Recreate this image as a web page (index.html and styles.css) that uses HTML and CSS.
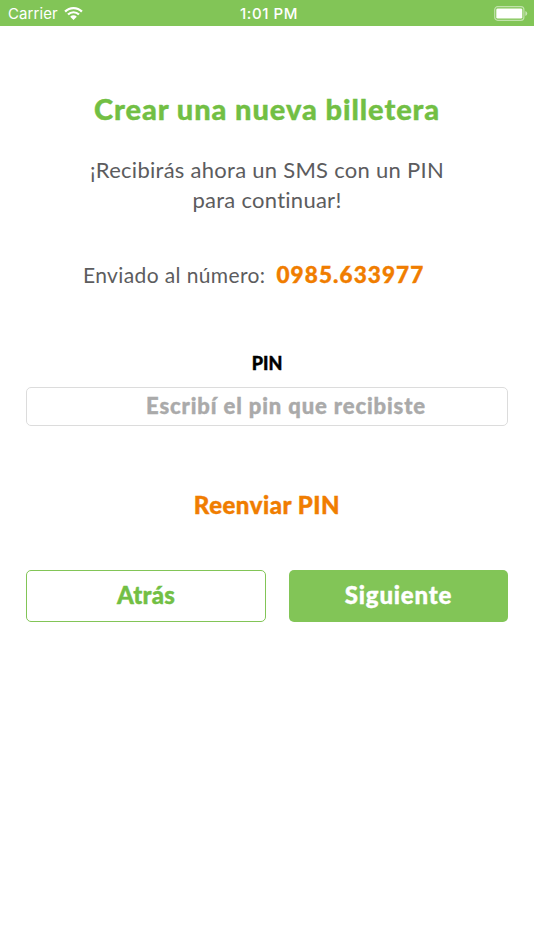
FILE: index.html
```
<!DOCTYPE html>
<html lang="es">
  <head>
    <meta charset="utf-8">
    <meta name="viewport" content="width=device-width, initial-scale=1">
    <title>Crear una nueva billetera</title>
    <link rel="stylesheet" href="styles.css">
  </head>
  <body>
    <header class="statusbar">
      <div class="carrier">
        <span class="carrier-name">Carrier</span>
        <svg class="wifi" width="19" height="14" viewBox="0 0 19 14" fill="#fff">
          <path d="M0.3 4.7 A13 13 0 0 1 18.7 4.7 L17.1 6.4 A10.8 10.8 0 0 0 1.9 6.4 Z" />
          <path d="M3.2 7.7 A9 9 0 0 1 15.8 7.7 L14.2 9.3 A6.7 6.7 0 0 0 4.8 9.3 Z" />
          <path d="M9.5 13.9 L6.2 10.7 A4.7 4.7 0 0 1 12.8 10.7 Z" />
        </svg>
      </div>
      <span class="time">1:01 PM</span>
      <svg class="battery" width="34" height="15" viewBox="0 0 34 15">
        <rect x="0.7" y="0.7" width="29.2" height="13.6" rx="3" fill="none" stroke="#fff" stroke-opacity="0.5" stroke-width="1.2" />
        <rect x="2.3" y="2.4" width="26" height="10.2" rx="1.4" fill="#fff" />
        <path d="M31.4 5 Q33.2 5.8 33.2 7.5 Q33.2 9.2 31.4 10 Z" fill="#fff" fill-opacity="0.55" />
      </svg>
    </header>

    <main class="wallet">
      <h1 class="title">Crear una nueva billetera</h1>
      <p class="intro">¡Recibirás ahora un SMS con un PIN<br>para continuar!</p>
      <p class="sent"><span class="sent-label">Enviado al número:</span><strong class="phone">0985.633977</strong></p>

      <form class="pinform" method="get" action="">
        <label class="pin-label" for="pin">PIN</label>
        <input class="pin" id="pin" type="text" inputmode="numeric" placeholder="Escribí el pin que recibiste">
        <button class="resend" type="button">Reenviar PIN</button>
        <div class="actions">
          <button class="back" type="button">Atrás</button>
          <button class="next" type="submit">Siguiente</button>
        </div>
      </form>
    </main>
  </body>
</html>
```

FILE: styles.css
```
* {
  box-sizing: border-box;
}
body {
  margin: 0;
  background-color: #fff;
  font-family: Lato, "Open Sans", sans-serif;
  font-variant-ligatures: none;
  color: #5c5c5e;
}
button {
  padding: 0;
  border: none;
  background: none;
  font-family: inherit;
  cursor: pointer;
}
.statusbar {
  display: grid;
  grid-template-columns: 1fr auto 1fr;
  align-items: center;
  height: 26px;
  padding: 1px 6px 0 8px;
  background-color: #82c557;
  color: #fff;
  font-family: Inter, sans-serif;
  font-size: 15px;
}
.carrier {
  display: flex;
  align-items: center;
  gap: 6px;
}
.carrier-name {
  letter-spacing: 0.1px;
}
.wifi {
  margin-top: -2px;
}
.time {
  padding-left: 2px;
  font-weight: 500;
  letter-spacing: 0.55px;
}
.battery {
  justify-self: end;
}
.wallet {
  padding: 64px 26px 0;
}
/* Lato stops at bold here, the thin stroke makes it heavier */
.title,
.phone,
.pin-label,
.pin,
.resend,
.back,
.next {
  font-weight: 900;
  -webkit-text-stroke: 0.4px;
}
.title {
  margin: 0;
  color: #72bf44;
  font-size: 29px;
  line-height: 38px;
  letter-spacing: 0.93px;
  text-align: center;
}
.intro {
  margin: 27px 0 0;
  font-size: 22px;
  line-height: 30px;
  letter-spacing: 0.27px;
  text-align: center;
}
.sent {
  display: flex;
  align-items: center;
  gap: 11px;
  margin: 45px 0 0;
  padding-left: 57px;
  font-size: 21px;
  line-height: 30px;
  white-space: nowrap;
}
.sent-label {
  letter-spacing: 0.38px;
}
.phone {
  color: #f07d00;
  font-size: 22.5px;
  letter-spacing: 1.1px;
}
.pinform {
  display: flex;
  flex-direction: column;
}
.pin-label {
  margin-top: 63px;
  color: #000;
  font-size: 18px;
  line-height: 20px;
  text-align: center;
}
.pin {
  height: 39px;
  margin-top: 14px;
  padding: 0 0 2px 38px;
  border: 1px solid #dcdcdc;
  border-radius: 5px;
  font-family: inherit;
  font-size: 22px;
  letter-spacing: 0.88px;
  text-align: center;
}
.pin::placeholder {
  color: #aaa;
  opacity: 1;
}
.resend {
  align-self: center;
  margin-top: 64px;
  color: #f07d00;
  font-size: 24px;
  line-height: 30px;
  letter-spacing: 0.5px;
}
.actions {
  display: grid;
  grid-template-columns: 240px 219px;
  gap: 23px;
  margin-top: 50px;
}
.back,
.next {
  height: 52px;
  padding-bottom: 3px;
  border-radius: 5px;
  font-size: 24px;
}
.back {
  border: 1px solid #82c557;
  color: #72bf44;
  letter-spacing: 0.2px;
}
.next {
  background-color: #82c557;
  color: #fff;
  letter-spacing: 0.8px;
}
```
